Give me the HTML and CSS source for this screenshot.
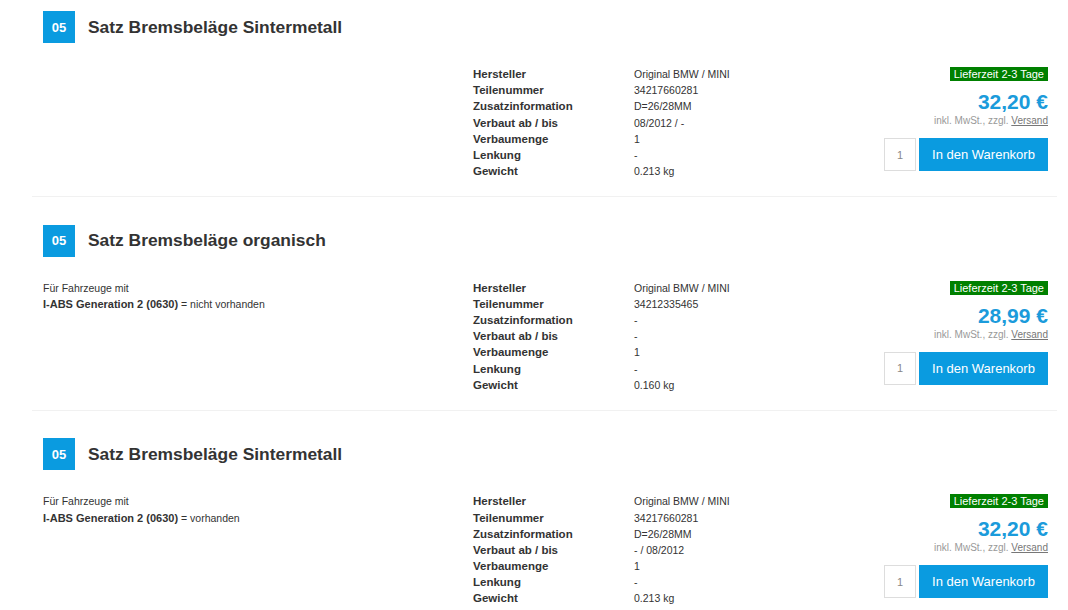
FILE: index.html
```html
<!DOCTYPE html>
<html lang="de">
<head>
    <meta charset="UTF-8">
    <meta name="viewport" content="width=device-width, initial-scale=1.0">
    <title>Bremsbeläge</title>

    <link rel="stylesheet" href="styles.css">
</head>
<body>
    <div class="liste">

        <div class="artikel">
            <div class="kopf">
                <span class="nummer">05</span>
                <h2>Satz Bremsbeläge Sintermetall</h2>
            </div>
            <div class="inhalt">
                <div class="hinweis"></div>
                <dl class="daten">
                    <dt>Hersteller</dt><dd>Original BMW / MINI</dd>
                    <dt>Teilenummer</dt><dd>34217660281</dd>
                    <dt>Zusatzinformation</dt><dd>D=26/28MM</dd>
                    <dt>Verbaut ab / bis</dt><dd>08/2012 / -</dd>
                    <dt>Verbaumenge</dt><dd>1</dd>
                    <dt>Lenkung</dt><dd>-</dd>
                    <dt>Gewicht</dt><dd>0.213 kg</dd>
                </dl>
                <div class="kauf">
                    <span class="lieferzeit">Lieferzeit 2-3 Tage</span>
                    <p class="preis">32,20 €</p>
                    <p class="steuer">inkl. MwSt., zzgl. <a href="#">Versand</a></p>
                    <div class="korb">
                        <input type="text" value="1" class="menge">
                        <button class="buttonK">In den Warenkorb</button>
                    </div>
                </div>
            </div>
        </div>

        <div class="artikel">
            <div class="kopf">
                <span class="nummer">05</span>
                <h2>Satz Bremsbeläge organisch</h2>
            </div>
            <div class="inhalt">
                <div class="hinweis">
                    <p>Für Fahrzeuge mit</p>
                    <p><b>I-ABS Generation 2 (0630)</b> = nicht vorhanden</p>
                </div>
                <dl class="daten">
                    <dt>Hersteller</dt><dd>Original BMW / MINI</dd>
                    <dt>Teilenummer</dt><dd>34212335465</dd>
                    <dt>Zusatzinformation</dt><dd>-</dd>
                    <dt>Verbaut ab / bis</dt><dd>-</dd>
                    <dt>Verbaumenge</dt><dd>1</dd>
                    <dt>Lenkung</dt><dd>-</dd>
                    <dt>Gewicht</dt><dd>0.160 kg</dd>
                </dl>
                <div class="kauf">
                    <span class="lieferzeit">Lieferzeit 2-3 Tage</span>
                    <p class="preis">28,99 €</p>
                    <p class="steuer">inkl. MwSt., zzgl. <a href="#">Versand</a></p>
                    <div class="korb">
                        <input type="text" value="1" class="menge">
                        <button class="buttonK">In den Warenkorb</button>
                    </div>
                </div>
            </div>
        </div>

        <div class="artikel">
            <div class="kopf">
                <span class="nummer">05</span>
                <h2>Satz Bremsbeläge Sintermetall</h2>
            </div>
            <div class="inhalt">
                <div class="hinweis">
                    <p>Für Fahrzeuge mit</p>
                    <p><b>I-ABS Generation 2 (0630)</b> = vorhanden</p>
                </div>
                <dl class="daten">
                    <dt>Hersteller</dt><dd>Original BMW / MINI</dd>
                    <dt>Teilenummer</dt><dd>34217660281</dd>
                    <dt>Zusatzinformation</dt><dd>D=26/28MM</dd>
                    <dt>Verbaut ab / bis</dt><dd>- / 08/2012</dd>
                    <dt>Verbaumenge</dt><dd>1</dd>
                    <dt>Lenkung</dt><dd>-</dd>
                    <dt>Gewicht</dt><dd>0.213 kg</dd>
                </dl>
                <div class="kauf">
                    <span class="lieferzeit">Lieferzeit 2-3 Tage</span>
                    <p class="preis">32,20 €</p>
                    <p class="steuer">inkl. MwSt., zzgl. <a href="#">Versand</a></p>
                    <div class="korb">
                        <input type="text" value="1" class="menge">
                        <button class="buttonK">In den Warenkorb</button>
                    </div>
                </div>
            </div>
        </div>

    </div>
</body>
</html>
```

FILE: styles.css
```css
* {
    padding: 0;
    margin: 0;
    box-sizing: border-box;
}

body {
    background-color: white;
    font-family: "Liberation Sans", Arial, sans-serif;
    color: #333;
}

.liste {
    padding: 0 11px 0 32px;
}

.artikel {
    padding: 27.5px 9px 17px 11px;
    border-bottom: 1px solid #f1f1f1;
}

.artikel:first-child {
    padding-top: 11px;
}

.kopf {
    display: flex;
    align-items: center;
    gap: 13px;
    margin-bottom: 23px;
}

.nummer {
    width: 32px;
    height: 32px;
    display: flex;
    align-items: center;
    justify-content: center;
    background-color: #0a9be0;
    color: white;
    font-size: 13px;
    font-weight: bold;
}

.kopf h2 {
    font-size: 17.4px;
    font-weight: bold;
    color: #333;
}

.inhalt {
    display: grid;
    grid-template-columns: 430px 1fr auto;
}

.hinweis {
    font-size: 10.5px;
    line-height: 16.17px;
}

.hinweis b {
    font-size: 11px;
}

.daten {
    display: grid;
    grid-template-columns: 161px auto;
    align-content: start;
    line-height: 16.17px;
}

.daten dt {
    font-size: 11.5px;
    font-weight: bold;
}

.daten dd {
    font-size: 10.5px;
}

.kauf {
    display: flex;
    flex-direction: column;
    align-items: flex-end;
}

.lieferzeit {
    margin-top: 1px;
    background-color: #008000;
    color: white;
    font-size: 11px;
    line-height: 14px;
    padding: 0 4px;
}

.preis {
    margin-top: 9px;
    font-size: 21px;
    line-height: 24px;
    font-weight: bold;
    color: #1b9bdb;
}

.steuer {
    margin-top: 1px;
    font-size: 10px;
    line-height: 12px;
    color: #999;
}

.steuer a {
    color: #777;
}

.korb {
    display: flex;
    gap: 3px;
    margin-top: 11px;
}

.menge {
    width: 32px;
    height: 33px;
    border: 1px solid #ddd;
    text-align: center;
    font-family: inherit;
    font-size: 11px;
    color: #888;
}

.buttonK {
    height: 33px;
    width: 129px;
    border: none;
    background-color: #0a9be0;
    color: white;
    font-family: inherit;
    font-size: 13px;
}
```
